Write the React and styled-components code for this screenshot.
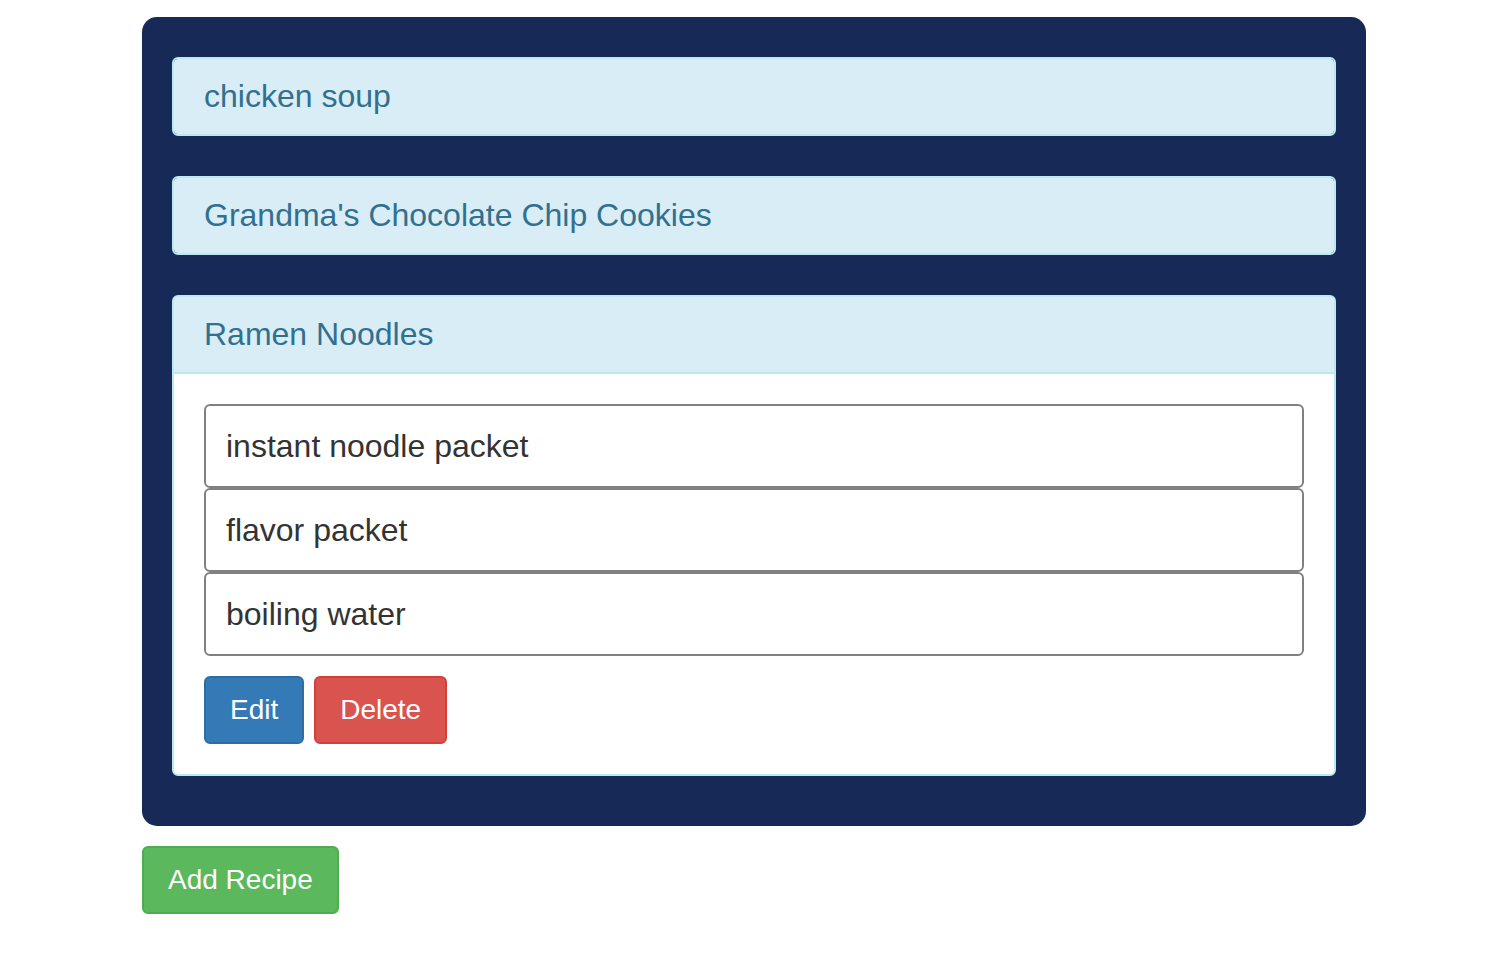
import React, { useState } from 'react'
import styled, { createGlobalStyle } from 'styled-components'

const GlobalStyle = createGlobalStyle`
  body {
    margin: 0;
    background: #fff;
    font-family: "Liberation Sans", Arial, sans-serif;
  }
`

const recipes = [
  { name: 'chicken soup', ingredients: ['chicken', 'broth', 'noodles'] },
  { name: "Grandma's Chocolate Chip Cookies", ingredients: ['flour', 'sugar', 'chocolate chips'] },
  { name: 'Ramen Noodles', ingredients: ['instant noodle packet', 'flavor packet', 'boiling water'] },
]

function App () {
  const [open, setOpen] = useState(2)
  return (
    <Page>
      <GlobalStyle />
      <RecipeBox>
        {recipes.map((r, i) => (
          <Panel key={r.name}>
            <PanelHeading open={open === i} onClick={() => setOpen(open === i ? -1 : i)}>
              {r.name}
            </PanelHeading>
            {open === i && (
              <PanelBody>
                <IngredientList>
                  {r.ingredients.map(ing => (
                    <Ingredient key={ing}>{ing}</Ingredient>
                  ))}
                </IngredientList>
                <ButtonRow>
                  <Button variant="primary">Edit</Button>
                  <Button variant="danger">Delete</Button>
                </ButtonRow>
              </PanelBody>
            )}
          </Panel>
        ))}
      </RecipeBox>
      <Button variant="success">Add Recipe</Button>
    </Page>
  )
}

const colors = {
  primary: { bg: '#337ab7', border: '#2e6da4' },
  danger: { bg: '#d9534f', border: '#d43f3a' },
  success: { bg: '#5cb85c', border: '#4cae4c' },
}

const Page = styled.div`
  padding: 17px 0 0 142px;
  width: 1224px;
`

const RecipeBox = styled.div`
  background: #172957;
  border-radius: 15px;
  padding: 40px 30px 10px;
  margin-bottom: 20px;
`

const Panel = styled.div`
  border: 2px solid #bce8f1;
  border-radius: 6px;
  background: #fff;
  margin-bottom: 40px;
  overflow: hidden;
`

const PanelHeading = styled.div`
  background: #d9edf7;
  color: #31708f;
  font-size: 32px;
  line-height: 37px;
  padding: 19px 30px;
  cursor: pointer;
  border-bottom: ${p => (p.open ? '2px solid #bce8f1' : 'none')};
`

const PanelBody = styled.div`
  padding: 30px 30px 30px;
`

const IngredientList = styled.ul`
  list-style: none;
  margin: 0 0 20px;
  padding: 0;
`

const Ingredient = styled.li`
  border: 2px solid #808080;
  border-radius: 6px;
  height: 84px;
  box-sizing: border-box;
  display: flex;
  align-items: center;
  padding: 0 20px;
  font-size: 32px;
  color: #333;
`

const ButtonRow = styled.div`
  display: flex;
  gap: 10px;
`

const Button = styled.button`
  font-family: "Liberation Sans", Arial, sans-serif;
  font-size: 28px;
  color: #fff;
  background: ${p => colors[p.variant].bg};
  border: 2px solid ${p => colors[p.variant].border};
  border-radius: 6px;
  height: 68px;
  padding: 0 24px;
  cursor: pointer;
`

export default App
